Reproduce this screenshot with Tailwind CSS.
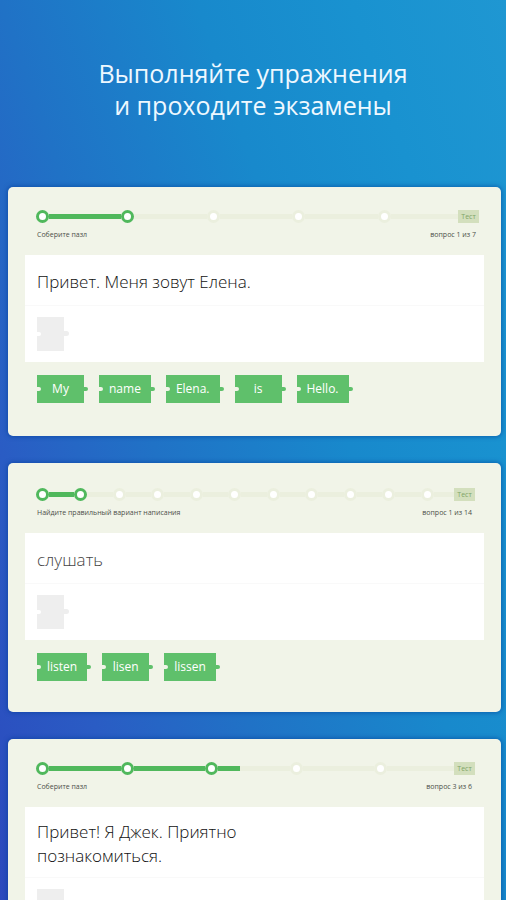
<!DOCTYPE html>
<html lang="ru">
  <head>
    <meta charset="UTF-8" />
    <meta name="viewport" content="width=device-width, initial-scale=1.0" />
    <title>Упражнения и экзамены</title>
    <script src="https://cdn.jsdelivr.net/npm/@tailwindcss/browser@4"></script>
  </head>
  <body
    class="h-screen overflow-hidden bg-[linear-gradient(71deg,#2c49bd_0%,#2b50c0_7%,#2a5cc4_19%,#2072c6_38%,#1889cc_62%,#1992d0_81%,#1f97d2_100%)] font-['Open_Sans','Noto_Sans',sans-serif]"
  >
    <h1 class="pt-[57px] text-center text-[25px] leading-8 text-[#eef8ff]">
      Выполняйте упражнения<br />и проходите экзамены
    </h1>

    <main class="mt-[66px] flex flex-col gap-[27px] pl-2 pr-[5px]">
      <!-- Exercise 1 -->
      <section class="h-[249px] shrink-0 rounded-[5px] bg-[#f1f4e8] px-[17px] pt-[23px] shadow-[0_0_4px_1px_rgba(0,60,150,0.55)]">
        <div class="pl-[11px] pr-[5px]">
          <div class="flex items-center">
            <ol class="flex flex-1 items-center">
              <li class="flex flex-1 items-center">
                <span class="size-[13px] rounded-full border-3 border-[#50b85c] bg-white"></span>
                <span class="h-[5px] flex-1 bg-[#50b85c]"></span>
              </li>
              <li class="flex flex-1 items-center">
                <span class="size-[13px] rounded-full border-3 border-[#50b85c] bg-white"></span>
                <span class="h-[5px] flex-1 bg-[#ebefde]"></span>
              </li>
              <li class="flex flex-1 items-center">
                <span class="size-[13px] rounded-full border-3 border-[#ebefde] bg-white"></span>
                <span class="h-[5px] flex-1 bg-[#ebefde]"></span>
              </li>
              <li class="flex flex-1 items-center">
                <span class="size-[13px] rounded-full border-3 border-[#ebefde] bg-white"></span>
                <span class="h-[5px] flex-1 bg-[#ebefde]"></span>
              </li>
              <li class="flex flex-1 items-center">
                <span class="size-[13px] rounded-full border-3 border-[#ebefde] bg-white"></span>
                <span class="h-[5px] flex-1 bg-[#ebefde]"></span>
              </li>
            </ol>
            <span class="-ml-[5px] h-[13px] w-[21px] bg-[#d3dfbd] text-center text-[7px] leading-[13px] text-[#7fa566]">Тест</span>
          </div>
          <div class="mt-[7px] flex justify-between pl-px pr-[3px] text-[7px] leading-[10px] text-[#4c4f48]">
            <span>Соберите пазл</span>
            <span>вопрос 1 из 7</span>
          </div>
        </div>
        <div class="mt-[15px] bg-white">
          <h2 class="border-b border-[#f9f9f9] px-3 pt-[15px] pb-[11px] text-[17px] leading-6 font-light text-[#111111]">
            Привет. Меня зовут Елена.
          </h2>
          <div class="px-3 pt-[11px] pb-[11px]">
            <div
              class="relative h-[34px] w-[27px] bg-[#eeeeee] before:absolute before:top-[15px] before:left-0 before:h-1 before:w-1 before:rounded-r-full before:bg-white after:absolute after:top-[14px] after:left-full after:h-[5px] after:w-[5px] after:rounded-r-full after:bg-[#eeeeee]"
            ></div>
          </div>
        </div>
        <div class="mt-[13px] flex gap-[15px] px-3 text-[12px] leading-7 text-white">
          <button
            class="relative min-w-[47px] bg-[#5fc06b] px-[10px] before:absolute before:top-3 before:left-0 before:h-1 before:w-1 before:rounded-r-full before:bg-[#f1f4e8] after:absolute after:top-3 after:left-full after:h-1 after:w-1 after:rounded-r-full after:bg-[#5fc06b]"
          >My</button>
          <button
            class="relative min-w-[47px] bg-[#5fc06b] px-[10px] before:absolute before:top-3 before:left-0 before:h-1 before:w-1 before:rounded-r-full before:bg-[#f1f4e8] after:absolute after:top-3 after:left-full after:h-1 after:w-1 after:rounded-r-full after:bg-[#5fc06b]"
          >name</button>
          <button
            class="relative min-w-[47px] bg-[#5fc06b] px-[10px] before:absolute before:top-3 before:left-0 before:h-1 before:w-1 before:rounded-r-full before:bg-[#f1f4e8] after:absolute after:top-3 after:left-full after:h-1 after:w-1 after:rounded-r-full after:bg-[#5fc06b]"
          >Elena.</button>
          <button
            class="relative min-w-[47px] bg-[#5fc06b] px-[10px] before:absolute before:top-3 before:left-0 before:h-1 before:w-1 before:rounded-r-full before:bg-[#f1f4e8] after:absolute after:top-3 after:left-full after:h-1 after:w-1 after:rounded-r-full after:bg-[#5fc06b]"
          >is</button>
          <button
            class="relative min-w-[47px] bg-[#5fc06b] px-[10px] before:absolute before:top-3 before:left-0 before:h-1 before:w-1 before:rounded-r-full before:bg-[#f1f4e8] after:absolute after:top-3 after:left-full after:h-1 after:w-1 after:rounded-r-full after:bg-[#5fc06b]"
          >Hello.</button>
        </div>
      </section>

      <!-- Exercise 2 -->
      <section class="h-[249px] shrink-0 rounded-[5px] bg-[#f1f4e8] px-[17px] pt-[25px] shadow-[0_0_4px_1px_rgba(0,60,150,0.55)]">
        <div class="pl-[11px] pr-[9px]">
          <div class="flex items-center">
            <ol class="flex flex-1 items-center">
              <li class="flex flex-1 items-center">
                <span class="size-[13px] rounded-full border-3 border-[#50b85c] bg-white"></span>
                <span class="h-[5px] flex-1 bg-[#50b85c]"></span>
              </li>
              <li class="flex flex-1 items-center">
                <span class="size-[13px] rounded-full border-3 border-[#50b85c] bg-white"></span>
                <span class="h-[5px] flex-1 bg-[#ebefde]"></span>
              </li>
              <li class="flex flex-1 items-center">
                <span class="size-[13px] rounded-full border-3 border-[#ebefde] bg-white"></span>
                <span class="h-[5px] flex-1 bg-[#ebefde]"></span>
              </li>
              <li class="flex flex-1 items-center">
                <span class="size-[13px] rounded-full border-3 border-[#ebefde] bg-white"></span>
                <span class="h-[5px] flex-1 bg-[#ebefde]"></span>
              </li>
              <li class="flex flex-1 items-center">
                <span class="size-[13px] rounded-full border-3 border-[#ebefde] bg-white"></span>
                <span class="h-[5px] flex-1 bg-[#ebefde]"></span>
              </li>
              <li class="flex flex-1 items-center">
                <span class="size-[13px] rounded-full border-3 border-[#ebefde] bg-white"></span>
                <span class="h-[5px] flex-1 bg-[#ebefde]"></span>
              </li>
              <li class="flex flex-1 items-center">
                <span class="size-[13px] rounded-full border-3 border-[#ebefde] bg-white"></span>
                <span class="h-[5px] flex-1 bg-[#ebefde]"></span>
              </li>
              <li class="flex flex-1 items-center">
                <span class="size-[13px] rounded-full border-3 border-[#ebefde] bg-white"></span>
                <span class="h-[5px] flex-1 bg-[#ebefde]"></span>
              </li>
              <li class="flex flex-1 items-center">
                <span class="size-[13px] rounded-full border-3 border-[#ebefde] bg-white"></span>
                <span class="h-[5px] flex-1 bg-[#ebefde]"></span>
              </li>
              <li class="flex flex-1 items-center">
                <span class="size-[13px] rounded-full border-3 border-[#ebefde] bg-white"></span>
                <span class="h-[5px] flex-1 bg-[#ebefde]"></span>
              </li>
              <li class="flex flex-1 items-center">
                <span class="size-[13px] rounded-full border-3 border-[#ebefde] bg-white"></span>
                <span class="h-[5px] flex-1 bg-[#ebefde]"></span>
              </li>
            </ol>
            <span class="-ml-[5px] h-[13px] w-[21px] bg-[#d3dfbd] text-center text-[7px] leading-[13px] text-[#7fa566]">Тест</span>
          </div>
          <div class="mt-[7px] flex justify-between pl-px pr-[3px] text-[7px] leading-[10px] text-[#4c4f48]">
            <span>Найдите правильный вариант написания</span>
            <span>вопрос 1 из 14</span>
          </div>
        </div>
        <div class="mt-[15px] bg-white">
          <h2 class="border-b border-[#f9f9f9] px-3 pt-[15px] pb-[11px] text-[17px] leading-6 font-light text-[#444444]">
            слушать
          </h2>
          <div class="px-3 pt-[11px] pb-[11px]">
            <div
              class="relative h-[34px] w-[27px] bg-[#eeeeee] before:absolute before:top-[15px] before:left-0 before:h-1 before:w-1 before:rounded-r-full before:bg-white after:absolute after:top-[14px] after:left-full after:h-[5px] after:w-[5px] after:rounded-r-full after:bg-[#eeeeee]"
            ></div>
          </div>
        </div>
        <div class="mt-[13px] flex gap-[15px] px-3 text-[12px] leading-7 text-white">
          <button
            class="relative min-w-[47px] bg-[#5fc06b] px-[10px] before:absolute before:top-3 before:left-0 before:h-1 before:w-1 before:rounded-r-full before:bg-[#f1f4e8] after:absolute after:top-3 after:left-full after:h-1 after:w-1 after:rounded-r-full after:bg-[#5fc06b]"
          >listen</button>
          <button
            class="relative min-w-[47px] bg-[#5fc06b] px-[10px] before:absolute before:top-3 before:left-0 before:h-1 before:w-1 before:rounded-r-full before:bg-[#f1f4e8] after:absolute after:top-3 after:left-full after:h-1 after:w-1 after:rounded-r-full after:bg-[#5fc06b]"
          >lisen</button>
          <button
            class="relative min-w-[47px] bg-[#5fc06b] px-[10px] before:absolute before:top-3 before:left-0 before:h-1 before:w-1 before:rounded-r-full before:bg-[#f1f4e8] after:absolute after:top-3 after:left-full after:h-1 after:w-1 after:rounded-r-full after:bg-[#5fc06b]"
          >lissen</button>
        </div>
      </section>

      <!-- Exercise 3 -->
      <section class="h-[273px] shrink-0 rounded-[5px] bg-[#f1f4e8] px-[17px] pt-[23px] shadow-[0_0_4px_1px_rgba(0,60,150,0.55)]">
        <div class="pl-[11px] pr-[9px]">
          <div class="flex items-center">
            <ol class="flex flex-1 items-center">
              <li class="flex flex-1 items-center">
                <span class="size-[13px] rounded-full border-3 border-[#50b85c] bg-white"></span>
                <span class="h-[5px] flex-1 bg-[#50b85c]"></span>
              </li>
              <li class="flex flex-1 items-center">
                <span class="size-[13px] rounded-full border-3 border-[#50b85c] bg-white"></span>
                <span class="h-[5px] flex-1 bg-[#50b85c]"></span>
              </li>
              <li class="flex flex-1 items-center">
                <span class="size-[13px] rounded-full border-3 border-[#50b85c] bg-white"></span>
                <span class="h-[5px] flex-1 bg-[#ebefde]">
                  <span class="block h-full bg-[#50b85c]" style="width: 31%"></span>
                </span>
              </li>
              <li class="flex flex-1 items-center">
                <span class="size-[13px] rounded-full border-3 border-[#ebefde] bg-white"></span>
                <span class="h-[5px] flex-1 bg-[#ebefde]"></span>
              </li>
              <li class="flex flex-1 items-center">
                <span class="size-[13px] rounded-full border-3 border-[#ebefde] bg-white"></span>
                <span class="h-[5px] flex-1 bg-[#ebefde]"></span>
              </li>
            </ol>
            <span class="-ml-[5px] h-[13px] w-[21px] bg-[#d3dfbd] text-center text-[7px] leading-[13px] text-[#7fa566]">Тест</span>
          </div>
          <div class="mt-[7px] flex justify-between pl-px pr-[3px] text-[7px] leading-[10px] text-[#4c4f48]">
            <span>Соберите пазл</span>
            <span>вопрос 3 из 6</span>
          </div>
        </div>
        <div class="mt-[15px] bg-white">
          <h2 class="border-b border-[#f9f9f9] px-3 pt-[13px] pb-[9px] text-[17px] leading-6 font-light text-[#111111]">
            Привет! Я Джек. Приятно<br />познакомиться.
          </h2>
          <div class="px-3 pt-[11px] pb-[11px]">
            <div
              class="relative h-[34px] w-[27px] bg-[#eeeeee] before:absolute before:top-[15px] before:left-0 before:h-1 before:w-1 before:rounded-r-full before:bg-white after:absolute after:top-[14px] after:left-full after:h-[5px] after:w-[5px] after:rounded-r-full after:bg-[#eeeeee]"
            ></div>
          </div>
        </div>
      </section>
    </main>
  </body>
</html>
